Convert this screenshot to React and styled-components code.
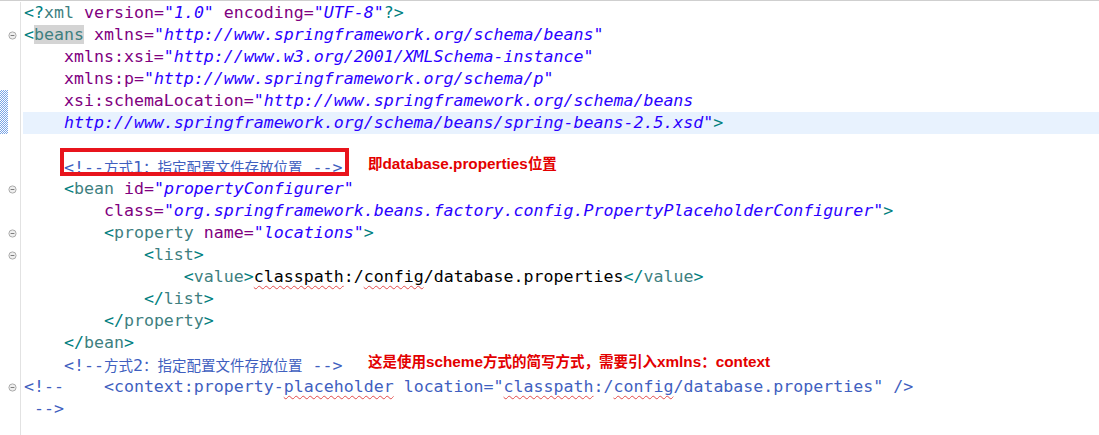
import React from "react";
import styled, { createGlobalStyle } from "styled-components";

const Global = createGlobalStyle`
  *, *::before, *::after { box-sizing: border-box; }
  html, body { margin: 0; padding: 0; background: #fff; }
`;

const Editor = styled.div`
  display: flex;
  flex-direction: column;
  min-height: 435px;
  border-top: 1px solid #cfcfcf;
  padding-top: 1px;
  font-family: "DejaVu Sans Mono", "Noto Sans CJK SC", monospace;
  font-size: 16.6px;
  color: #000;
`;

const Row = styled.div`
  display: flex;
  height: 22px;
  line-height: 22px;
`;

const Filler = styled.div`
  display: flex;
  flex: 1;
`;

const Gutter = styled.div`
  width: 21px;
  flex: none;
  display: flex;
  align-items: center;
  border-right: 1px solid #e2e2e2;
  margin-right: 2px;
`;

const Mark = styled.span`
  align-self: stretch;
  width: 8px;
  flex: none;
  background: ${(p) =>
    p.$on
      ? "repeating-conic-gradient(#7aa5e6 0 25%, #ffffff 0 50%) 0 0 / 2px 2px"
      : "transparent"};
`;

const FoldIcon = styled.svg`
  width: 9px;
  height: 9px;
  flex: none;
  display: block;
`;

const Fold = () => (
  <FoldIcon viewBox="0 0 9 9">
    <circle cx="4.5" cy="4.5" r="3.6" fill="#efefef" stroke="#a3a3a3" strokeWidth="0.9" />
    <line x1="2.6" y1="4.5" x2="6.4" y2="4.5" stroke="#7c7c7c" strokeWidth="1" />
  </FoldIcon>
);

const Code = styled.div`
  white-space: pre;
  padding-left: calc(1px + ${(p) => p.$ind || 0}ch);
  ${(p) => (p.$w ? `width: ${p.$w}px; flex: none;` : `flex: 1;`)}
  background: ${(p) => (p.$current ? "#e8f2fe" : "transparent")};
`;

const Br = styled.span`color: #008080;`;
const Tag = styled.span`color: #3f7f7f;`;
const Attr = styled.span`color: #7f007f;`;
const Val = styled.span`color: #2a00ff; font-style: italic;`;
const Cmt = styled.span`color: #3f5fbf;`;
const Txt = styled.span`color: #000;`;
const Hl = styled.span`background: #d4d4d4;`;

const Typo = styled.span`
  text-decoration: underline wavy #e24a4a;
  text-decoration-thickness: 1px;
  text-underline-offset: 3px;
  text-decoration-skip-ink: none;
`;

const Han = styled.span`
  font-family: "Noto Sans CJK SC", sans-serif;
  font-size: ${(p) => p.$size}px;
`;

const Boxed = styled.span`
  position: relative;
  display: inline-block;
  height: 22px;
  vertical-align: top;
  &::after {
    content: "";
    position: absolute;
    top: -8px;
    bottom: 2px;
    left: -4px;
    right: -7px;
    border: 4px solid #e8141c;
    pointer-events: none;
  }
`;

const Note = styled.span`
  align-self: flex-start;
  line-height: 14px;
  font-family: "Liberation Sans", "Noto Sans CJK SC", sans-serif;
  font-weight: 700;
  font-size: 15.3px;
  color: #e30000;
  white-space: pre;
`;

const CommentCN = ({ n }) => (
  <Cmt>
    {"<!--"}
    <Han $size={14.5}>方式</Han>
    {n}
    <Han $size={14.5}>：指定配置文件存放位置</Han>
    {" -->"}
  </Cmt>
);

export default function App() {
  return (
    <>
      <Global />
      <Editor>
        <Row>
          <Gutter><Mark /></Gutter>
          <Code>
            <Br>{"<?"}</Br><Tag>xml</Tag> <Attr>version=</Attr><Val>"1.0"</Val>{" "}
            <Attr>encoding=</Attr><Val>"UTF-8"</Val><Br>{"?>"}</Br>
          </Code>
        </Row>
        <Row>
          <Gutter><Mark /><Fold /></Gutter>
          <Code>
            <Br>{"<"}</Br><Hl><Tag>beans</Tag></Hl> <Attr>xmlns=</Attr>
            <Val>"http://www.springframework.org/schema/beans"</Val>
          </Code>
        </Row>
        <Row>
          <Gutter><Mark /></Gutter>
          <Code $ind={4}>
            <Attr>xmlns:xsi=</Attr><Val>"http://www.w3.org/2001/XMLSchema-instance"</Val>
          </Code>
        </Row>
        <Row>
          <Gutter><Mark /></Gutter>
          <Code $ind={4}>
            <Attr>xmlns:p=</Attr><Val>"http://www.springframework.org/schema/p"</Val>
          </Code>
        </Row>
        <Row>
          <Gutter><Mark $on /></Gutter>
          <Code $ind={4}>
            <Attr>xsi:schemaLocation=</Attr><Val>"http://www.springframework.org/schema/beans</Val>
          </Code>
        </Row>
        <Row>
          <Gutter><Mark $on /></Gutter>
          <Code $ind={4} $current>
            <Val>http://www.springframework.org/schema/beans/spring-beans-2.5.xsd"</Val><Br>{">"}</Br>
          </Code>
        </Row>
        <Row>
          <Gutter><Mark /></Gutter>
          <Code />
        </Row>
        <Row>
          <Gutter><Mark /></Gutter>
          <Code $ind={4} $w={345}>
            <Boxed><CommentCN n="1" /></Boxed>
          </Code>
          <Note>
            <Han $size={14.5}>即</Han>database.properties<Han $size={14.5}>位置</Han>
          </Note>
        </Row>
        <Row>
          <Gutter><Mark /><Fold /></Gutter>
          <Code $ind={4}>
            <Br>{"<"}</Br><Tag>bean</Tag> <Attr>id=</Attr><Val>"propertyConfigurer"</Val>
          </Code>
        </Row>
        <Row>
          <Gutter><Mark /></Gutter>
          <Code $ind={8}>
            <Attr>class=</Attr>
            <Val>"org.springframework.beans.factory.config.PropertyPlaceholderConfigurer"</Val>
            <Br>{">"}</Br>
          </Code>
        </Row>
        <Row>
          <Gutter><Mark /><Fold /></Gutter>
          <Code $ind={8}>
            <Br>{"<"}</Br><Tag>property</Tag> <Attr>name=</Attr><Val>"locations"</Val><Br>{">"}</Br>
          </Code>
        </Row>
        <Row>
          <Gutter><Mark /><Fold /></Gutter>
          <Code $ind={12}>
            <Br>{"<"}</Br><Tag>list</Tag><Br>{">"}</Br>
          </Code>
        </Row>
        <Row>
          <Gutter><Mark /></Gutter>
          <Code $ind={16}>
            <Br>{"<"}</Br><Tag>value</Tag><Br>{">"}</Br>
            <Txt>
              <Typo>classpath</Typo>:/<Typo>config</Typo>/database.properties
            </Txt>
            <Br>{"</"}</Br><Tag>value</Tag><Br>{">"}</Br>
          </Code>
        </Row>
        <Row>
          <Gutter><Mark /></Gutter>
          <Code $ind={12}>
            <Br>{"</"}</Br><Tag>list</Tag><Br>{">"}</Br>
          </Code>
        </Row>
        <Row>
          <Gutter><Mark /></Gutter>
          <Code $ind={8}>
            <Br>{"</"}</Br><Tag>property</Tag><Br>{">"}</Br>
          </Code>
        </Row>
        <Row>
          <Gutter><Mark /></Gutter>
          <Code $ind={4}>
            <Br>{"</"}</Br><Tag>bean</Tag><Br>{">"}</Br>
          </Code>
        </Row>
        <Row>
          <Gutter><Mark /></Gutter>
          <Code $ind={4} $w={345}>
            <CommentCN n="2" />
          </Code>
          <Note>
            <Han $size={14.5}>这是使用</Han>scheme<Han $size={14.5}>方式的简写方式，需要引入</Han>xmlns
            <Han $size={14.5}>：</Han>context
          </Note>
        </Row>
        <Row>
          <Gutter><Mark /><Fold /></Gutter>
          <Code>
            <Cmt>
              {"<!--    <context:property-"}<Typo>placeholder</Typo>{' location="'}
              <Typo>classpath</Typo>{":/"}<Typo>config</Typo>{'/database.properties" />'}
            </Cmt>
          </Code>
        </Row>
        <Row>
          <Gutter><Mark /></Gutter>
          <Code>
            <Cmt>{" -->"}</Cmt>
          </Code>
        </Row>
        <Filler>
          <Gutter><Mark /></Gutter>
          <Code />
        </Filler>
      </Editor>
    </>
  );
}
